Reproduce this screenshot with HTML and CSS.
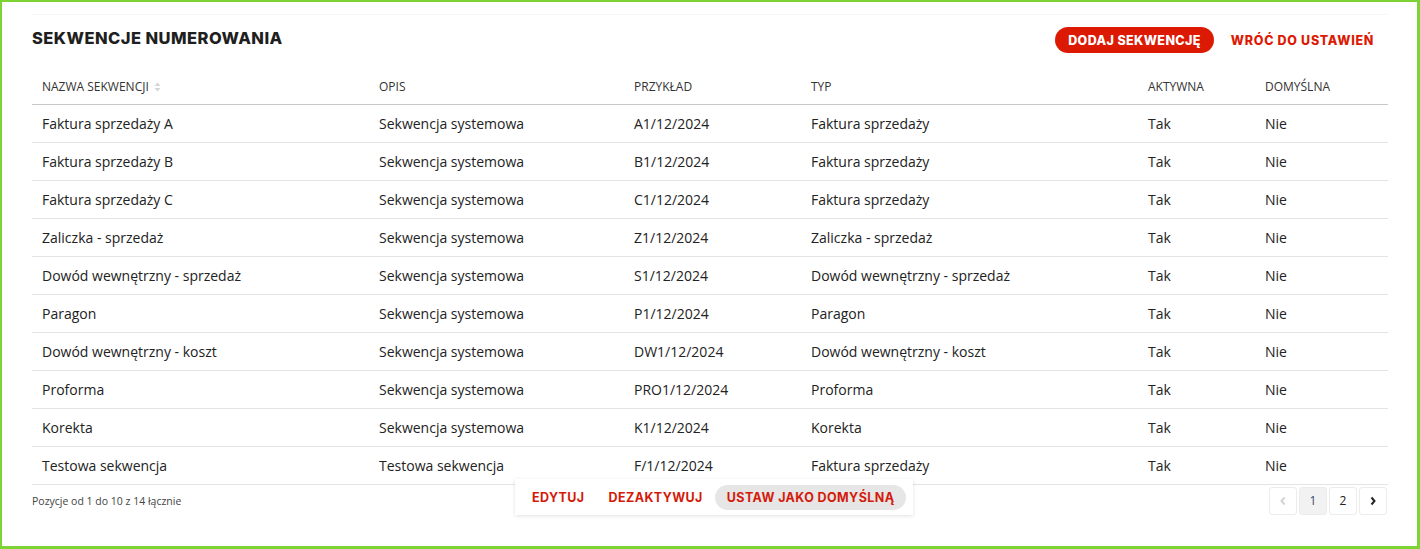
FILE: index.html
```html
<!DOCTYPE html>
<html lang="pl">
<head>
<meta charset="utf-8">
<title>Sekwencje numerowania</title>
<link rel="stylesheet" href="styles.css">
</head>
<body>
<div class="page">
  <div class="card">
    <div class="topbar">
      <h1 class="title">SEKWENCJE NUMEROWANIA</h1>
      <div class="actions">
        <button class="btn-primary">DODAJ SEKWENCJĘ</button>
        <a class="btn-link">WRÓĆ DO USTAWIEŃ</a>
      </div>
    </div>
    <table class="grid">
      <colgroup>
        <col class="c1"><col class="c2"><col class="c3"><col class="c4"><col class="c5"><col class="c6">
      </colgroup>
      <thead>
        <tr>
          <th>NAZWA SEKWENCJI <svg class="sort" width="7" height="10" viewBox="0 0 7 10"><path d="M3.5 0.5 L6.5 4 H0.5 Z" fill="#d6d6d6"/><path d="M3.5 9.5 L6.5 6 H0.5 Z" fill="#d6d6d6"/></svg></th>
          <th>OPIS</th>
          <th>PRZYKŁAD</th>
          <th>TYP</th>
          <th>AKTYWNA</th>
          <th>DOMYŚLNA</th>
        </tr>
      </thead>
      <tbody>
        <tr><td>Faktura sprzedaży A</td><td>Sekwencja systemowa</td><td>A1/12/2024</td><td>Faktura sprzedaży</td><td>Tak</td><td>Nie</td></tr>
        <tr><td>Faktura sprzedaży B</td><td>Sekwencja systemowa</td><td>B1/12/2024</td><td>Faktura sprzedaży</td><td>Tak</td><td>Nie</td></tr>
        <tr><td>Faktura sprzedaży C</td><td>Sekwencja systemowa</td><td>C1/12/2024</td><td>Faktura sprzedaży</td><td>Tak</td><td>Nie</td></tr>
        <tr><td>Zaliczka - sprzedaż</td><td>Sekwencja systemowa</td><td>Z1/12/2024</td><td>Zaliczka - sprzedaż</td><td>Tak</td><td>Nie</td></tr>
        <tr><td>Dowód wewnętrzny - sprzedaż</td><td>Sekwencja systemowa</td><td>S1/12/2024</td><td>Dowód wewnętrzny - sprzedaż</td><td>Tak</td><td>Nie</td></tr>
        <tr><td>Paragon</td><td>Sekwencja systemowa</td><td>P1/12/2024</td><td>Paragon</td><td>Tak</td><td>Nie</td></tr>
        <tr><td>Dowód wewnętrzny - koszt</td><td>Sekwencja systemowa</td><td>DW1/12/2024</td><td>Dowód wewnętrzny - koszt</td><td>Tak</td><td>Nie</td></tr>
        <tr><td>Proforma</td><td>Sekwencja systemowa</td><td>PRO1/12/2024</td><td>Proforma</td><td>Tak</td><td>Nie</td></tr>
        <tr><td>Korekta</td><td>Sekwencja systemowa</td><td>K1/12/2024</td><td>Korekta</td><td>Tak</td><td>Nie</td></tr>
        <tr><td>Testowa sekwencja</td><td>Testowa sekwencja</td><td>F/1/12/2024</td><td>Faktura sprzedaży</td><td>Tak</td><td>Nie</td></tr>
      </tbody>
    </table>
    <div class="footer">
      <div class="info">Pozycje od 1 do 10 z 14 łącznie</div>
      <div class="pager">
        <span class="pg disabled"><svg width="8" height="10" viewBox="0 0 8 10"><path d="M5.5 1.5 L2.5 5 L5.5 8.5" fill="none" stroke="#d4d4d4" stroke-width="2"/></svg></span>
        <span class="pg active">1</span>
        <span class="pg">2</span>
        <span class="pg"><svg width="8" height="10" viewBox="0 0 8 10"><path d="M2.5 1.5 L5.5 5 L2.5 8.5" fill="none" stroke="#222" stroke-width="2"/></svg></span>
      </div>
    </div>
    <div class="floatbar">
      <span class="fb-item">EDYTUJ</span>
      <span class="fb-item">DEZAKTYWUJ</span>
      <span class="fb-item fb-hover">USTAW JAKO DOMYŚLNĄ</span>
    </div>
  </div>
</div>
</body>
</html>
```

FILE: styles.css
```css
* { box-sizing: border-box; }
html, body { margin: 0; padding: 0; background: #fff; }
body { font-family: "Open Sans", "Noto Sans", sans-serif; color: #222; }
.page {
  width: 1420px;
  height: 549px;
  border-style: solid;
  border-color: #7bd433;
  border-width: 2px 3px 3px 2px;
  padding: 12px 29px 0 30px;
}
.card {
  position: relative;
  height: 100%;
  border-top: 1px solid #f6f6f6;
}
.topbar {
  display: flex;
  align-items: center;
  justify-content: space-between;
  padding-top: 12px;
  height: 38px;
}
.title {
  margin: 0 0 4px 0;
  font-family: "Inter", "Lato", sans-serif;
  font-weight: 800;
  font-size: 16.5px;
  letter-spacing: 0.45px;
  color: #1f1f1f;
}
.actions { display: flex; align-items: center; gap: 17px; padding-right: 14px; }
.btn-primary {
  height: 26px;
  padding: 0 13px;
  border: 0;
  border-radius: 13px;
  background: #dc1a04;
  color: #fff;
  font-family: "Inter", "Lato", sans-serif;
  font-weight: 800;
  font-size: 12.5px;
  letter-spacing: 0.4px;
}
.btn-link {
  color: #dc1a04;
  font-family: "Inter", "Lato", sans-serif;
  font-weight: 800;
  font-size: 12.5px;
  letter-spacing: 0.7px;
}
.grid {
  width: 100%;
  border-collapse: collapse;
  table-layout: fixed;
  margin-top: 17px;
}
.c1 { width: 337px; }
.c2 { width: 255px; }
.c3 { width: 177px; }
.c4 { width: 337px; }
.c5 { width: 117px; }
.c6 { width: 133px; }
.grid th {
  text-align: left;
  font-weight: 400;
  font-size: 12px;
  color: #333;
  height: 34px;
  padding: 0 10px;
  border-bottom: 1px solid #c8c8c8;
  vertical-align: middle;
}
.sort { vertical-align: -1px; margin-left: 2px; }
.grid td {
  height: 38px;
  padding: 0 10px;
  font-size: 14px;
  color: #222;
  border-bottom: 1px solid #e4e4e4;
  white-space: nowrap;
}
.footer {
  display: flex;
  justify-content: space-between;
  align-items: center;
  padding-top: 2px;
}
.info { font-size: 10.5px; color: #444; }
.pager { display: flex; gap: 2px; padding-right: 1px; }
.pg {
  width: 28px;
  height: 28px;
  display: flex;
  align-items: center;
  justify-content: center;
  border: 1px solid #ececec;
  border-radius: 3px;
  font-size: 12px;
  color: #222;
  background: #fff;
}
.pg.active { background: #f2f2f2; color: #3a4a6a; }
.floatbar {
  position: absolute;
  left: 483px;
  top: 464px;
  width: 398px;
  height: 36px;
  background: #fff;
  box-shadow: 0 1px 4px rgba(0,0,0,0.12);
  display: flex;
  align-items: center;
  padding: 0 5px 0 5px;
}
.fb-item {
  font-family: "Inter", "Lato", sans-serif;
  font-weight: 700;
  font-size: 12.5px;
  letter-spacing: 0.4px;
  color: #d41a0a;
  padding: 0 12px;
  height: 25px;
  display: flex;
  align-items: center;
  border-radius: 13px;
}
.fb-hover { background: #e6e6e6; }
```
